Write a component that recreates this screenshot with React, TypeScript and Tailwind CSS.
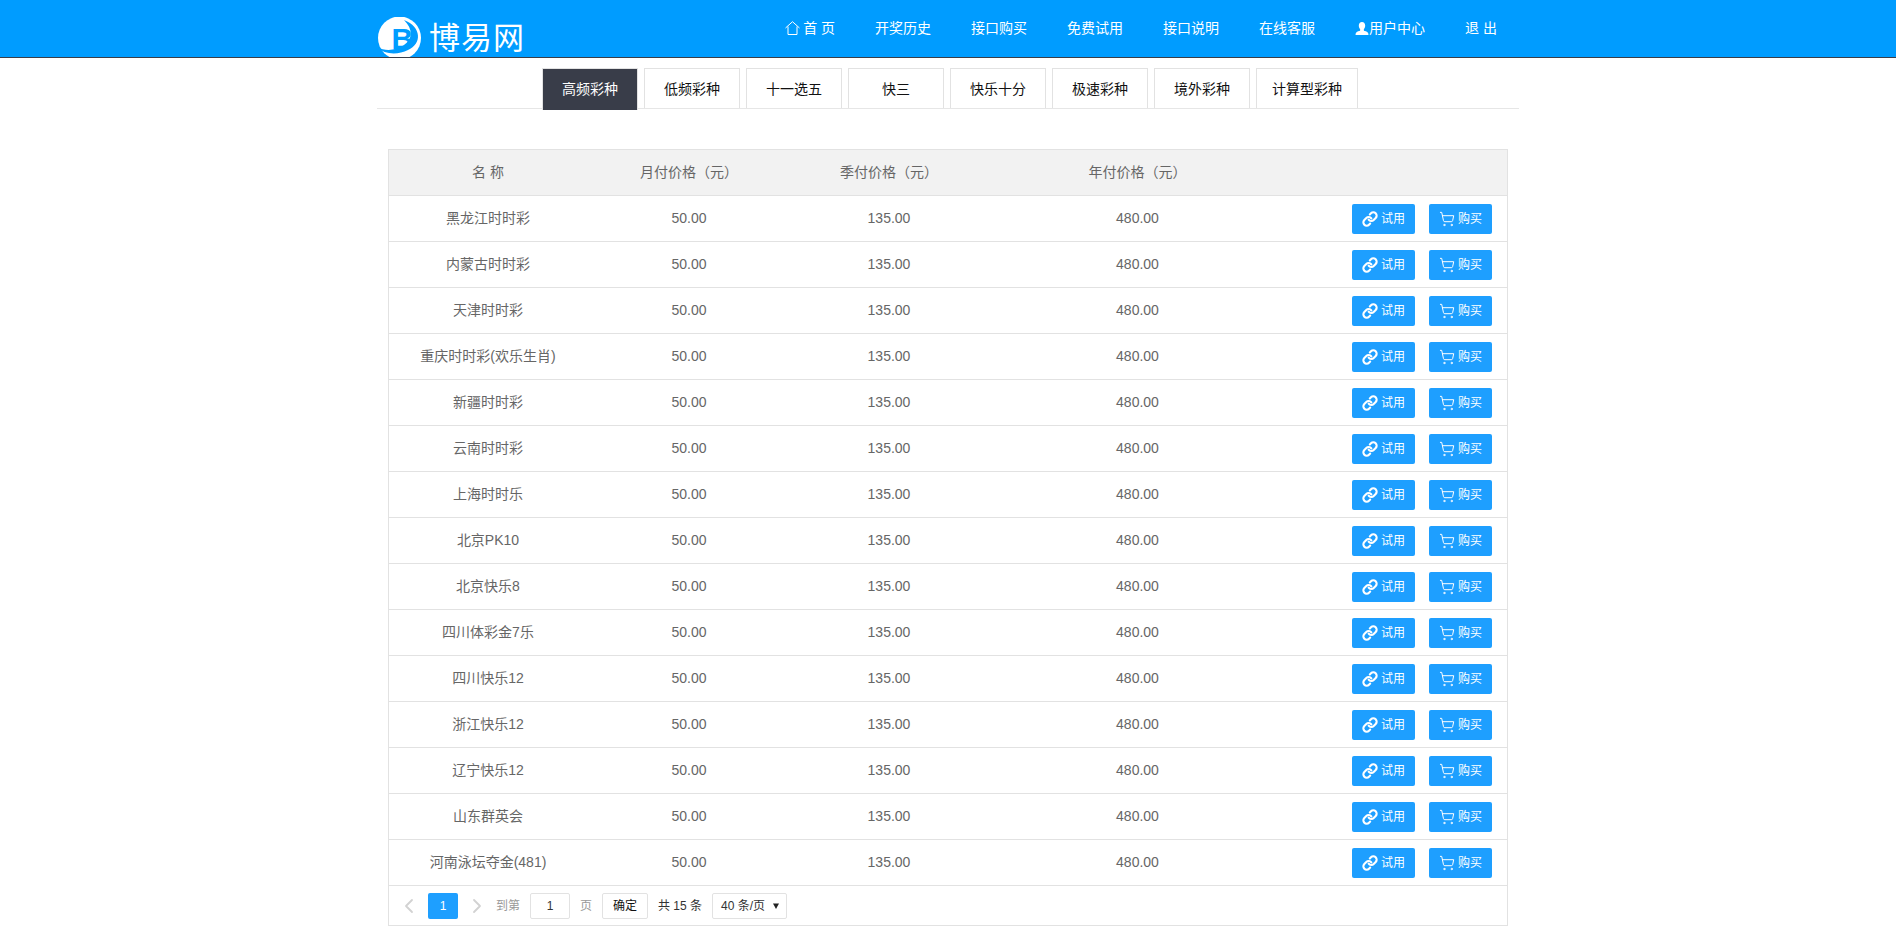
import { ChevronLeft, ChevronRight, Link, ShoppingCart } from "lucide-react";

const FONT = "font-['Liberation_Sans','Noto_Sans_CJK_SC',sans-serif]";

const navs = ["开奖历史", "接口购买", "免费试用", "接口说明", "在线客服"];
const tabs = ["高频彩种", "低频彩种", "十一选五", "快三", "快乐十分", "极速彩种", "境外彩种"];
const rows = [
  "黑龙江时时彩",
  "内蒙古时时彩",
  "天津时时彩",
  "重庆时时彩(欢乐生肖)",
  "新疆时时彩",
  "云南时时彩",
  "上海时时乐",
  "北京PK10",
  "北京快乐8",
  "四川体彩金7乐",
  "四川快乐12",
  "浙江快乐12",
  "辽宁快乐12",
  "山东群英会",
  "河南泳坛夺金(481)",
];

function Logo() {
  return (
    <svg width="46" height="40" viewBox="0 0 46 40" className="shrink-0">
      <circle cx="22.5" cy="21" r="21.5" fill="#fff" />
      <text x="14.5" y="32" fontSize="30" fontWeight="700" fill="#009cff" fontFamily="Liberation Sans">
        B
      </text>
      <path d="M27 3 C45 10 45 27 31 33 C21 38 8 38 0 30 C9 35 20 33 27 28 C36 22 36 12 27 3 Z" fill="#009cff" />
    </svg>
  );
}

function HomeIcon() {
  return (
    <svg width="15" height="14" viewBox="0 0 15 14" fill="none" stroke="#fff" strokeWidth="1" className="mr-[3px] shrink-0">
      <path d="M0.5 7 L7.5 0.7 L14.5 7 M3 5.5 V13.5 H12 V5.5" />
    </svg>
  );
}

function UserIcon() {
  return (
    <svg width="14" height="13" viewBox="0 0 14 13" fill="#fff" className="shrink-0">
      <path d="M7 0 C9 0 10.2 1.5 10.2 3.6 C10.2 5.4 9.5 6.6 8.8 7.4 C8.6 8.3 9 8.7 10 9.1 C12 9.8 13.5 10.3 13.5 13 H0.5 C0.5 10.3 2 9.8 4 9.1 C5 8.7 5.4 8.3 5.2 7.4 C4.5 6.6 3.8 5.4 3.8 3.6 C3.8 1.5 5 0 7 0 Z" />
    </svg>
  );
}

function Row({ name }: { name: string }) {
  return (
    <div className="flex h-[46px] items-center border-b border-[#e2e2e2] pb-px text-sm text-[#666]">
      <div className="w-[198px] text-center">{name}</div>
      <div className="w-[204px] text-center">50.00</div>
      <div className="w-[196px] text-center">135.00</div>
      <div className="w-[301px] text-center">480.00</div>
      <div className="mt-[2px] flex flex-1 justify-end gap-[14px] pr-[15px]">
        <button className="flex h-[30px] w-[63px] items-center justify-center gap-[3px] rounded-[2px] bg-[#1e9fff] text-xs text-white">
          <Link size={16} strokeWidth={3.2} color="#fff" />
          试用
        </button>
        <button className="flex h-[30px] w-[63px] items-center justify-center gap-[3px] rounded-[2px] bg-[#1e9fff] text-xs text-white">
          <ShoppingCart size={16} strokeWidth={1.5} color="#fff" />
          购买
        </button>
      </div>
    </div>
  );
}

export default function App() {
  return (
    <div className={`${FONT} min-h-[933px] bg-white`}>
      <header className="h-[58px] border-b border-[#393d49] bg-[#009cff]">
        <div className="mx-auto flex h-[57px] w-[1142px] justify-between">
          <div className="flex items-start pt-[17px]">
            <Logo />
            <span className="ml-[6px] mt-[3px] text-[31px] leading-[38px] tracking-[1px] text-white">博易网</span>
          </div>
          <nav className="flex h-[57px] items-center pb-px pr-[2px] text-sm text-white">
            <a className="flex items-center px-5">
              <HomeIcon />
              首 页
            </a>
            {navs.map((n) => (
              <a key={n} className="px-5">
                {n}
              </a>
            ))}
            <a className="flex items-center px-5">
              <UserIcon />
              用户中心
            </a>
            <a className="px-5">退 出</a>
          </nav>
        </div>
      </header>

      <main className="mx-auto w-[1142px]">
        <div className="mt-[10px] flex h-[41px] items-start gap-[6px] border-b border-[#e6e6e6] pl-[165px] text-sm text-[#111]">
          {tabs.map((t, i) => (
            <div
              key={t}
              className={
                i === 0
                  ? "flex h-[42px] w-[96px] shrink-0 items-center justify-center border border-b-0 border-[#e2e2e2] bg-[#393d49] pb-[2px] text-white"
                  : "flex h-[40px] w-[96px] shrink-0 items-center justify-center border border-b-0 border-[#e2e2e2] bg-white"
              }
            >
              {t}
            </div>
          ))}
          <div className="flex h-[40px] w-[102px] shrink-0 items-center justify-center border border-b-0 border-[#e2e2e2] bg-white">
            计算型彩种
          </div>
        </div>

        <div className="ml-[11px] mt-[40px] w-[1120px] border border-[#e2e2e2]">
          <div className="flex h-[46px] items-center border-b border-[#e2e2e2] bg-[#f2f2f2] pb-px text-sm text-[#666]">
            <div className="w-[198px] text-center">名 称</div>
            <div className="w-[204px] text-center">月付价格（元）</div>
            <div className="w-[196px] text-center">季付价格（元）</div>
            <div className="w-[301px] text-center">年付价格（元）</div>
          </div>
          {rows.map((r) => (
            <Row key={r} name={r} />
          ))}
          <div className="flex h-[39px] items-center pl-[8px] pt-px text-xs text-[#333]">
            <ChevronLeft size={24} strokeWidth={1.8} color="#d2d2d2" />
            <div className="ml-[7px] flex h-[26px] w-[30px] items-center justify-center rounded-[2px] bg-[#1e9fff] text-white">
              1
            </div>
            <ChevronRight size={24} strokeWidth={1.8} color="#d2d2d2" className="ml-[7px]" />
            <span className="ml-[7px] w-[24px] whitespace-nowrap text-[#999]">到第</span>
            <div className="ml-[10px] flex h-[26px] w-[40px] items-center justify-center rounded-[2px] border border-[#e2e2e2]">
              1
            </div>
            <span className="ml-[10px] w-[12px] text-[#999]">页</span>
            <div className="ml-[10px] flex h-[26px] w-[46px] items-center justify-center rounded-[2px] border border-[#e2e2e2] text-[#111]">
              确定
            </div>
            <span className="ml-[10px] w-[44px] whitespace-nowrap">共 15 条</span>
            <div className="ml-[10px] flex h-[26px] w-[75px] items-center justify-between rounded-[2px] border border-[#e2e2e2] pl-[8px] pr-[7px]">
              <span className="whitespace-nowrap">40 条/页</span>
              <svg width="6" height="6" viewBox="0 0 6 6" fill="#222">
                <path d="M0 0.5 H6 L3 6 Z" />
              </svg>
            </div>
          </div>
        </div>
      </main>
    </div>
  );
}
